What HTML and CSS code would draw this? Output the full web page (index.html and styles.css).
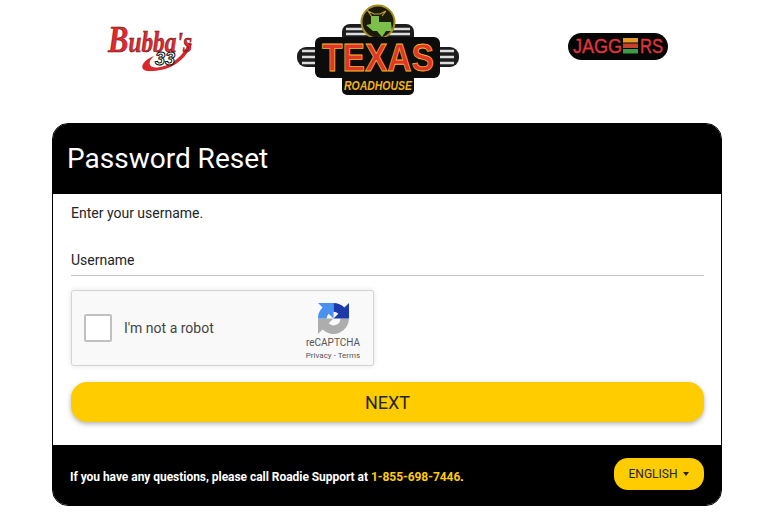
FILE: index.html
```html
<!DOCTYPE html>
<html lang="en">

<head>
  <meta charset="UTF-8">
  <title>Password Reset</title>
  <link rel="stylesheet" href="styles.css">
</head>

<body>
  <div class="logos">
    <svg class="logo logo-bubbas" viewBox="0 -12 94 66" width="94" height="66" role="img" aria-label="Bubba's 33">
      <path class="bubbas-swoosh" d="M49 32C38 36 33 45 42 47C58 48 78 42 87 20C85 18 84 18 83 20C77 34 64 43.500 50 43.500C43 43 43 37 49 32Z"/>
      <text class="bubbas-word" x="3" y="28" textLength="84" lengthAdjust="spacingAndGlyphs"><tspan class="bubbas-cap">B</tspan>ubba's</text>
      <text class="bubbas-num" x="50" y="41">33</text>
    </svg>
    <svg class="logo logo-texas" viewBox="0 0 164 92" width="164" height="92" role="img" aria-label="Texas Roadhouse">
      <rect class="tx-rail" x="46" y="20" width="72" height="20" rx="8"/>
      <path class="tx-line" d="M50 25H114M50 30H114"/>
      <rect class="tx-rail" x="1" y="43" width="162" height="20" rx="9"/>
      <path class="tx-line" d="M6 47H158M6 53H158M6 59H158"/>
      <circle class="tx-badge" cx="82" cy="18" r="16.500"/>
      <path class="tx-state" d="M75 12H83V18H95L96 27L90 27L86 33L81 27H77L70 21L75 20Z"/>
      <path class="tx-horn" d="M76 13L72 7L78 10H84L90 7L86 12" />
      <rect class="tx-plate" x="19" y="33" width="125" height="41" rx="6"/>
      <rect class="tx-plate" x="46" y="70" width="72" height="21" rx="5"/>
      <text class="tx-word" x="82" y="67" textLength="112" lengthAdjust="spacingAndGlyphs">TEXAS</text>
      <text class="tx-road" x="82" y="85.500" textLength="68" lengthAdjust="spacingAndGlyphs">ROADHOUSE</text>
    </svg>
    <svg class="logo logo-jaggers" viewBox="0 0 100 27" width="100" height="27" role="img" aria-label="Jaggers">
      <rect class="jg-pill" width="100" height="27" rx="13.500"/>
      <text class="jg-word" x="5" y="20" textLength="49" lengthAdjust="spacingAndGlyphs">JAGG</text>
      <rect class="jg-bar-a" x="55" y="5" width="15" height="4.500"/>
      <rect class="jg-bar-b" x="55" y="10.500" width="15" height="4.500"/>
      <rect class="jg-bar-c" x="55" y="16" width="15" height="4.500"/>
      <text class="jg-word" x="72" y="20" textLength="23" lengthAdjust="spacingAndGlyphs">RS</text>
    </svg>
  </div>

  <div class="card">
    <div class="card-header">
      <h1>Password Reset</h1>
    </div>
    <div class="card-body">
      <p class="hint">Enter your username.</p>
      <div class="field">
        <label for="username">Username</label>
        <input id="username" type="text">
      </div>
      <div class="captcha">
        <span class="captcha-box"></span>
        <span class="captcha-label">I'm not a robot</span>
        <div class="captcha-brand">
          <svg class="captcha-icon" viewBox="0 0 32 32" width="31" height="31">
            <path fill="#adadad" d="M32 16A16 16 0 0 1 4.700 27.300L0 32V16H16L11 21A7 7 0 0 0 23 16Z"/>
            <path fill="#4a90ee" d="M0 16A16 16 0 0 1 4.700 4.700L0 0H16V16L11 11A7 7 0 0 0 9 16Z"/>
            <path fill="#1c3aa9" d="M16 0A16 16 0 0 1 27.300 4.700L32 0V16H16L21 11A7 7 0 0 0 16 9Z"/>
          </svg>
          <span class="captcha-name">reCAPTCHA</span>
          <span class="captcha-links">Privacy - Terms</span>
        </div>
      </div>
      <button class="next-button" type="button">NEXT</button>
    </div>
    <div class="card-footer">
      <p class="support">If you have any questions, please call Roadie Support at <a href="#">1-855-698-7446</a>.</p>
      <button class="lang-button" type="button">ENGLISH<span class="caret"></span></button>
    </div>
  </div>
</body>

</html>
```
FILE: styles.css
```css
* {
  box-sizing: border-box;
}

body {
  margin: 0;
  background: #fff;
  font-family: Roboto, "Liberation Sans", sans-serif;
  color: #212529;
}

/*Logo row*/
.logos {
  display: flex;
  align-items: flex-start;
  height: 123px;
  padding-left: 105px;
}

.logo {
  display: block;
  flex: none;
}

.logo-bubbas {
  margin-top: 12px;
}

.logo-texas {
  margin-top: 4px;
  margin-left: 97px;
}

.logo-jaggers {
  margin-top: 33px;
  margin-left: 108px;
}

.bubbas-word {
  font: italic 700 29px "Liberation Serif", serif;
  fill: #e8262b;
  stroke: #3a1414;
  stroke-width: 0.5px;
}

.bubbas-cap {
  font-size: 38px;
}

.bubbas-swoosh {
  fill: #d8262b;
}

.bubbas-num {
  font: italic 700 18px "Liberation Sans", sans-serif;
  fill: #fff;
  stroke: #111;
  stroke-width: 1px;
}

.tx-rail {
  fill: #1c1c1c;
}

.tx-line {
  stroke: #ddd;
  stroke-width: 2.500;
  fill: none;
}

.tx-badge {
  fill: #1c1a08;
  stroke: #a58f1d;
  stroke-width: 2px;
}

.tx-state {
  fill: #7cc04b;
}

.tx-horn {
  fill: none;
  stroke: #b9a536;
  stroke-width: 1.200;
}

.tx-plate {
  fill: #0c0c0c;
}

.tx-word {
  font: 700 39px "Liberation Sans", sans-serif;
  text-anchor: middle;
  fill: #e3342b;
  stroke: #f5b81f;
  stroke-width: 0.8px;
}

.tx-road {
  font: italic 700 12.500px "Liberation Sans", sans-serif;
  text-anchor: middle;
  fill: #f2b316;
}

.jg-pill {
  fill: #060606;
}

.jg-word {
  font: 400 20px "Liberation Sans", sans-serif;
  fill: #e0353c;
  stroke: #e0353c;
  stroke-width: 0.3px;
}

.jg-bar-a {
  fill: #e39a2d;
}

.jg-bar-b {
  fill: #c9402f;
}

.jg-bar-c {
  fill: #3f9a47;
}

/*Card*/
.card {
  width: 670px;
  height: 383px;
  margin-left: 52px;
  display: flex;
  flex-direction: column;
  background: #fff;
  border: 1px solid #000;
  border-radius: 16px;
  overflow: hidden;
}

.card-header {
  height: 70px;
  flex: none;
  display: flex;
  align-items: center;
  padding-left: 14px;
  background: #000;
}

.card-header h1 {
  margin: 0;
  font-size: 28px;
  font-weight: 400;
  line-height: 1.2;
  color: #fff;
}

.card-body {
  flex: 1;
  padding: 11px 17px 0 18px;
}

.hint {
  margin: 0;
  font-size: 14px;
  line-height: 16px;
}

.field {
  margin-top: 31px;
  border-bottom: 1px solid #c4c4c4;
  height: 24px;
}

.field label {
  display: block;
  font-size: 14px;
  line-height: 16px;
}

.field input {
  display: none;
}

/*Recaptcha*/
.captcha {
  width: 303px;
  height: 76px;
  margin-top: 14px;
  display: flex;
  align-items: center;
  padding-left: 12px;
  background: #f9f9f9;
  border: 1px solid #d3d3d3;
  border-radius: 3px;
  box-shadow: 0 0 4px 1px rgba(0, 0, 0, 0.08);
}

.captcha-box {
  width: 28px;
  height: 28px;
  background: #fff;
  border: 2px solid #c1c1c1;
  border-radius: 2px;
  flex: none;
}

.captcha-label {
  margin-left: 12px;
  font-size: 14px;
  color: #444;
}

.captcha-brand {
  margin-left: auto;
  width: 70px;
  margin-top: 7px;
  margin-right: 5px;
  display: flex;
  flex-direction: column;
  align-items: center;
  color: #555;
}

.captcha-name {
  margin-top: 3px;
  font-size: 10px;
  line-height: 12px;
}

.captcha-links {
  margin-top: 1px;
  font-size: 8px;
  line-height: 11px;
}

.next-button {
  display: block;
  width: 100%;
  height: 40px;
  margin-top: 16px;
  border: 0;
  border-radius: 16px;
  background: #ffcc00;
  font-family: inherit;
  font-size: 18px;
  color: #212529;
  box-shadow: 0 2px 5px rgba(0, 0, 0, 0.3);
}

/*Footer*/
.card-footer {
  height: 60px;
  flex: none;
  display: flex;
  align-items: center;
  justify-content: space-between;
  padding: 0 17px;
  background: #000;
}

.support {
  margin: 3px 0 0;
  font-size: 12px;
  font-weight: 700;
  letter-spacing: -0.04px;
  color: #fff;
}

.support a {
  color: #ffcc00;
  text-decoration: none;
}

.lang-button {
  width: 90px;
  height: 32px;
  margin-top: -2px;
  border: 0;
  border-radius: 14px;
  background: #ffcc00;
  font-family: inherit;
  font-size: 12px;
  color: #212529;
}

.caret {
  display: inline-block;
  margin-left: 6px;
  vertical-align: 2px;
  border-top: 4px solid #212529;
  border-left: 3px solid transparent;
  border-right: 3px solid transparent;
}
```
